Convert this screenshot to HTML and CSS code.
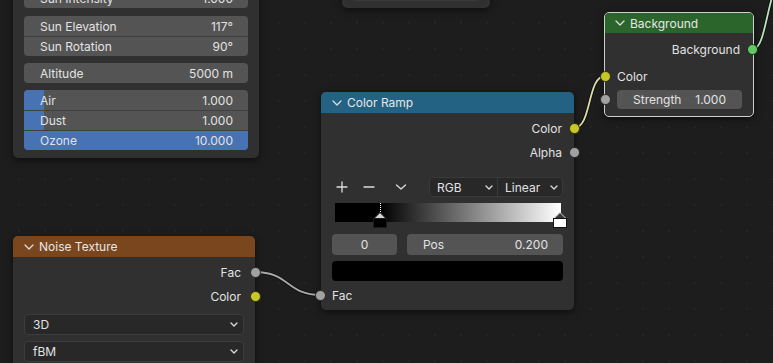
FILE: index.html
```html
<!DOCTYPE html>
<html lang="en">
<head>
    <meta charset="UTF-8">
    <meta name="viewport" content="width=device-width, initial-scale=1.0">
    <title>Node Editor</title>
    <link rel="stylesheet" href="styles.css">
</head>
<body>
    <div class="canvas">
        <!-- links between sockets -->
        <svg class="links" width="773" height="363" viewBox="0 0 773 363">
            <path class="link-shadow" d="M255 272 C 290 272, 286 295, 321 295"/>
            <path class="link link-grey" d="M255 272 C 290 272, 286 295, 321 295"/>
            <path class="link-shadow" d="M574 128 C 592 128, 587 76, 605 76"/>
            <path class="link link-yellow" d="M574 128 C 592 128, 587 76, 605 76"/>
            <path class="link-shadow" d="M753 49 C 764 49, 766 12, 775 -12"/>
            <path class="link link-green" d="M753 49 C 764 49, 766 12, 775 -12"/>
        </svg>

        <div class="node node-top">
            <div class="field"></div>
        </div>

        <div class="node node-sky">
            <div class="group first">
                <div class="field"><span>Sun Intensity</span><span>1.000</span></div>
            </div>
            <div class="group">
                <div class="field"><span>Sun Elevation</span><span>117°</span></div>
                <div class="field"><span>Sun Rotation</span><span>90°</span></div>
            </div>
            <div class="group">
                <div class="field"><span>Altitude</span><span>5000 m</span></div>
            </div>
            <div class="group">
                <div class="field slider"><span class="bar" style="width: 20px"></span><span>Air</span><span>1.000</span></div>
                <div class="field slider"><span class="bar" style="width: 20px"></span><span>Dust</span><span>1.000</span></div>
                <div class="field slider"><span class="bar" style="width: 100%"></span><span>Ozone</span><span>10.000</span></div>
            </div>
        </div>

        <div class="node node-ramp">
            <div class="header header-converter">
                <svg class="chevron" width="10" height="6" viewBox="0 0 10 6"><path d="M1 1 L5 5 L9 1"/></svg>
                <span>Color Ramp</span>
            </div>
            <div class="ramp-body">
                <div class="socket-row out">Color<span class="socket yellow"></span></div>
                <div class="socket-row out">Alpha<span class="socket grey"></span></div>

                <div class="toolbar">
                    <svg class="tool plus" width="20" height="20" viewBox="0 0 20 20"><path d="M5 10 H15 M10 5 V15"/></svg>
                    <svg class="tool minus" width="20" height="20" viewBox="0 0 20 20"><path d="M5 10 H15"/></svg>
                    <svg class="tool more" width="20" height="20" viewBox="0 0 20 20"><path d="M5.5 8 L10 12 L14.5 8"/></svg>
                    <div class="menus">
                        <div class="menu rgb">RGB<svg class="mini-chev" width="8" height="5" viewBox="0 0 8 5"><path d="M1 1 L4 4 L7 1"/></svg></div>
                        <div class="menu linear">Linear<svg class="mini-chev" width="8" height="5" viewBox="0 0 8 5"><path d="M1 1 L4 4 L7 1"/></svg></div>
                    </div>
                </div>

                <div class="ramp">
                    <span class="stop-line"></span>
                    <svg class="stop stop-black" width="14" height="16" viewBox="0 0 14 16">
                        <path d="M7 0.5 L13 6.5 H1 Z" fill="#d4d4d4" stroke="#1a1a1a" stroke-width="1"/>
                        <rect x="0.5" y="6.5" width="13" height="9" fill="#000" stroke="#1a1a1a"/>
                    </svg>
                    <svg class="stop stop-white" width="14" height="16" viewBox="0 0 14 16">
                        <path d="M7 0.5 L13 6.5 H1 Z" fill="#3a3a3a" stroke="#d0d0d0" stroke-width="1"/>
                        <rect x="0.5" y="6.5" width="13" height="9" fill="#fff" stroke="#111"/>
                    </svg>
                </div>

                <div class="stop-fields">
                    <div class="field index">0</div>
                    <div class="field pos"><span>Pos</span><span>0.200</span></div>
                </div>

                <div class="swatch"></div>

                <div class="socket-row in">Fac<span class="socket grey"></span></div>
            </div>
        </div>

        <div class="node node-bg">
            <div class="header header-shader">
                <svg class="chevron" width="10" height="6" viewBox="0 0 10 6"><path d="M1 1 L5 5 L9 1"/></svg>
                <span>Background</span>
            </div>
            <div class="bg-body">
                <div class="socket-row out">Background<span class="socket green"></span></div>
                <div class="socket-row in">Color<span class="socket yellow"></span></div>
                <div class="strength-row">
                    <span class="socket grey"></span>
                    <div class="field"><span>Strength</span><span>1.000</span></div>
                </div>
            </div>
        </div>

        <div class="node node-noise">
            <div class="header header-texture">
                <svg class="chevron" width="10" height="6" viewBox="0 0 10 6"><path d="M1 1 L5 5 L9 1"/></svg>
                <span>Noise Texture</span>
            </div>
            <div class="noise-body">
                <div class="socket-row out">Fac<span class="socket grey"></span></div>
                <div class="socket-row out">Color<span class="socket yellow"></span></div>
                <div class="dropdown">3D<svg class="mini-chev" width="8" height="5" viewBox="0 0 8 5"><path d="M1 1 L4 4 L7 1"/></svg></div>
                <div class="dropdown">fBM<svg class="mini-chev" width="8" height="5" viewBox="0 0 8 5"><path d="M1 1 L4 4 L7 1"/></svg></div>
            </div>
        </div>
    </div>
</body>
</html>
```

FILE: styles.css
```css
:root {
    --canvas-bg: #1d1d1d;
    --node-bg: #303030;
    --field-bg: #545454;
    --menu-bg: #282828;
    --slider-blue: #4772b3;
    --text-color: #e2e2e2;
    --socket-yellow: #c7c729;
    --socket-grey: #a1a1a1;
    --socket-green: #63c763;
}

body {
    margin: 0;
    padding: 0;
    background: var(--canvas-bg);
    font-family: 'Inter', 'Noto Sans', sans-serif;
    font-size: 12px;
    color: var(--text-color);
    overflow: hidden;
}

.canvas {
    position: relative;
    width: 773px;
    height: 363px;
    overflow: hidden;
    background-color: var(--canvas-bg);
    background-image: radial-gradient(circle, #252525 0.8px, transparent 1.2px);
    background-size: 26px 26px;
    background-position: 6px 10px;
}

/* links */
.links {
    position: absolute;
    left: 0;
    top: 0;
}

.links path {
    fill: none;
}

.link-shadow {
    stroke: rgba(0, 0, 0, 0.55);
    stroke-width: 3.5;
}

.link {
    stroke-width: 1.8;
}

.link-grey { stroke: #a8a8a8; }
.link-yellow { stroke: #dcdca8; }
.link-green { stroke: #b8e2c0; }

/* nodes */
.node {
    position: absolute;
    box-sizing: border-box;
    background: var(--node-bg);
    border-radius: 5px;
    box-shadow: 0 2px 7px rgba(0, 0, 0, 0.55);
}

.header {
    display: flex;
    align-items: center;
    gap: 5px;
    height: 21px;
    padding-left: 11px;
    border-radius: 5px 5px 0 0;
    color: #e6e6e6;
}

.header-converter { background: #246283; }
.header-shader { background: #2b652b; border-radius: 4px 4px 0 0; height: 20px; padding-left: 10px; }
.header-texture { background: #79461d; }

.chevron path,
.mini-chev path,
.tool path {
    fill: none;
    stroke: #dcdcdc;
    stroke-width: 1.3;
    stroke-linecap: round;
    stroke-linejoin: round;
}

.field {
    position: relative;
    display: flex;
    align-items: center;
    justify-content: space-between;
    box-sizing: border-box;
    height: 20px;
    padding: 0 15px 0 16px;
    background: var(--field-bg);
    border-radius: 4px;
    overflow: hidden;
    color: var(--text-color);
}

.field span {
    position: relative;
}

/* sockets */
.socket-row {
    position: relative;
    display: flex;
    align-items: center;
    height: 24px;
}

.socket-row.out {
    justify-content: flex-end;
    padding-right: 12px;
}

.socket-row.in {
    padding-left: 11px;
}

.socket {
    position: absolute;
    top: 50%;
    width: 9px;
    height: 9px;
    margin-top: -5.5px;
    border-radius: 50%;
    border: 1px solid rgba(0, 0, 0, 0.7);
}

.socket-row.out .socket { right: -6px; }
.socket-row.in .socket { left: -6px; }

.socket.yellow { background: var(--socket-yellow); }
.socket.grey { background: var(--socket-grey); }
.socket.green { background: var(--socket-green); }

/* partial node at the top */
.node-top {
    left: 342px;
    top: -30px;
    width: 148px;
    height: 38px;
    padding: 0 11px;
    display: flex;
    align-items: flex-end;
}

.node-top .field {
    width: 100%;
    height: 31px;
    margin-bottom: 7px;
    background: #3a3a3a;
}

/* sky texture */
.node-sky {
    left: 13px;
    top: -30px;
    width: 246px;
    padding: 18px 11px 8px;
    display: flex;
    flex-direction: column;
    gap: 7px;
}

.group {
    display: flex;
    flex-direction: column;
    border-radius: 4px;
    overflow: hidden;
}

.group.first {
    margin-bottom: 1px;
}

.group .field {
    border-radius: 0;
}

.group .field + .field {
    border-top: 1px solid #3f3f3f;
}

.slider .bar {
    position: absolute;
    left: 0;
    top: 0;
    bottom: 0;
    background: var(--slider-blue);
}

/* color ramp */
.node-ramp {
    left: 321px;
    top: 92px;
    width: 253px;
}

.ramp-body {
    padding: 3px 0 3px;
}

.toolbar {
    display: flex;
    align-items: center;
    height: 20px;
    margin-top: 13px;
    padding: 0 11px;
}

.tool.minus { margin-left: 7px; }
.tool.more { margin-left: 12px; }

.menus {
    display: flex;
    margin-left: 18px;
    height: 20px;
    flex: 1;
    background: var(--menu-bg);
    border: 1px solid #3a3a3a;
    border-radius: 4px;
    box-sizing: border-box;
}

.menu {
    display: flex;
    align-items: center;
    justify-content: space-between;
    padding: 0 4px 0 7px;
}

.menu.rgb {
    width: 68px;
    box-sizing: border-box;
    border-right: 1px solid #3a3a3a;
}

.menu.linear {
    flex: 1;
}

.ramp {
    position: relative;
    height: 19px;
    margin: 6px 13px 0 14px;
    background: linear-gradient(to right, #000 0%, #000 20%, #fff 99.5%);
}

.stop-line {
    position: absolute;
    left: 20%;
    top: 0;
    height: 9px;
    border-left: 1px dotted #ffffff;
}

.stop {
    position: absolute;
    top: 9px;
}

.stop-black { left: calc(20% - 7px); }
.stop-white { right: -6px; }

.stop-fields {
    display: flex;
    gap: 10px;
    margin-top: 12px;
    padding: 0 11px;
}

.stop-fields .field {
    height: 21px;
}

.field.index {
    width: 65px;
    justify-content: center;
    padding: 0;
}

.field.pos {
    flex: 1;
}

.swatch {
    height: 20px;
    margin: 6px 11px 0;
    background: #000;
    border-radius: 4px;
}

.ramp-body .socket-row.in {
    margin-top: 2px;
}

/* background shader */
.node-bg {
    left: 604px;
    top: 12px;
    width: 150px;
    border: 1px solid #cfcfcf;
}

.bg-body {
    padding: 4px 0 7px;
}

.node-bg .socket-row.out {
    padding-right: 13px;
}

.node-bg .socket-row.out .socket { right: -5px; }
.node-bg .socket-row.in .socket { left: -5px; }

.node-bg .socket-row.in {
    margin-top: 3px;
    padding-left: 12px;
}

.strength-row {
    position: relative;
    margin-top: 2px;
    padding: 0 11px 0 12px;
}

.strength-row .socket {
    left: -5px;
}

.strength-row .field {
    height: 19px;
    padding: 0 16px;
}

/* noise texture */
.node-noise {
    left: 13px;
    top: 236px;
    width: 242px;
    height: 160px;
}

.noise-body {
    padding-top: 3px;
}

.noise-body .socket-row.out {
    padding-right: 14px;
}

.dropdown {
    display: flex;
    align-items: center;
    justify-content: space-between;
    box-sizing: border-box;
    height: 21px;
    margin: 6px 11px 0;
    padding: 0 5px 0 8px;
    background: var(--menu-bg);
    border: 1px solid #3c3c3c;
    border-radius: 4px;
}
```
